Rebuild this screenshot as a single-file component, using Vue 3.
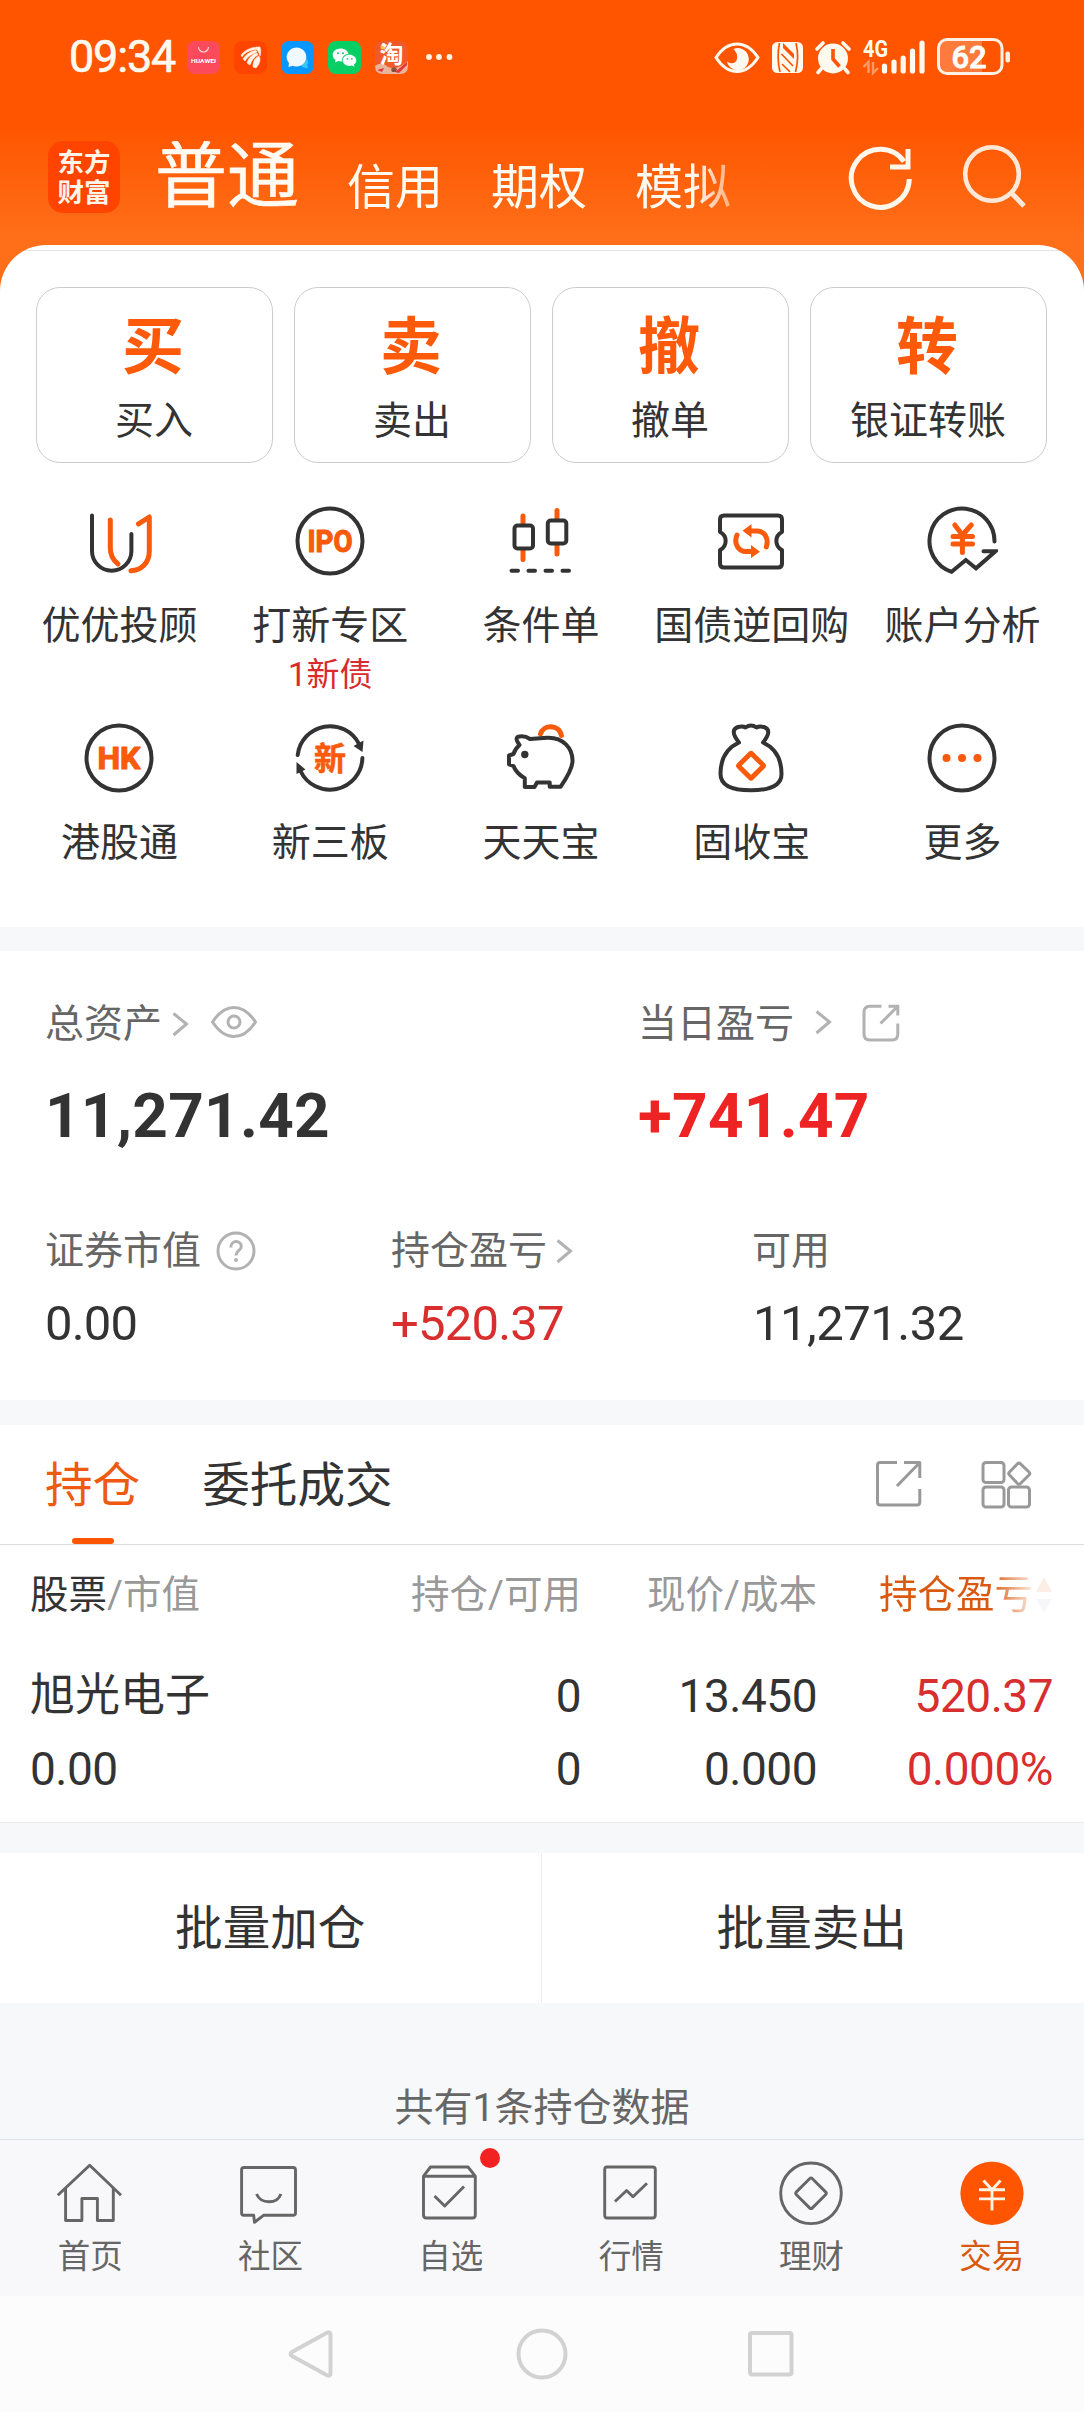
<script setup>
const accounts = ['信用', '期权', '模拟']

const trades = [
  { mark: '买', label: '买入' },
  { mark: '卖', label: '卖出' },
  { mark: '撤', label: '撤单' },
  { mark: '转', label: '银证转账' },
]

const tools = [
  { icon: 'advisor', label: '优优投顾' },
  { icon: 'ipo', label: '打新专区', note: '1新债' },
  { icon: 'candles', label: '条件单' },
  { icon: 'ticket', label: '国债逆回购' },
  { icon: 'analysis', label: '账户分析' },
  { icon: 'hk', label: '港股通' },
  { icon: 'board', label: '新三板' },
  { icon: 'pig', label: '天天宝' },
  { icon: 'bag', label: '固收宝' },
  { icon: 'more', label: '更多' },
]

const tabs = [
  { icon: 'home', label: '首页' },
  { icon: 'community', label: '社区' },
  { icon: 'watch', label: '自选', dot: true },
  { icon: 'market', label: '行情' },
  { icon: 'finance', label: '理财' },
  { icon: 'trade', label: '交易', active: true },
]
</script>

<template>
  <div class="screen">
    <header class="header">
      <div class="status">
        <span class="clock">09:34</span>
        <div class="apps">
          <svg width="33" height="33" viewBox="0 0 33 33">
            <rect width="33" height="33" rx="8" fill="#fb4a5c" />
            <path d="M11.500 6a5 5 0 0 0 10 0" fill="none" stroke="#ffd9dc" stroke-width="1.200" />
            <text x="4" y="21.500" font-size="5.600" font-weight="700" textLength="25" lengthAdjust="spacingAndGlyphs" fill="#fff">HUAWEI</text>
          </svg>
          <svg width="33" height="33" viewBox="0 0 33 33">
            <rect width="33" height="33" rx="8" fill="#ff4400" />
            <path d="M7 14C12 8 18 6 26 6C27 10 27 13 26 15C25 12 24 9 22 8.500C17 9 11 11 8 16ZM9 18C13 12 18 10 22 9.500L23 11C18 13 14 15 11 20ZM13 22C15 16 19 13 23 12L24 14C20 16 18 19 16 24ZM19 26C19 20 21 17 25 15C27 18 26 23 22 27Z" fill="#fff4e6" stroke="#fff4e6" stroke-width=".6" />
          </svg>
          <svg width="33" height="33" viewBox="0 0 33 33">
            <rect width="33" height="33" rx="8" fill="#0a96ff" />
            <path d="M19 22c5 1 7-3 6-5 3 3 2 6 1 7l1 3c-3 0-6 0-8-5z" fill="#35c8f5" />
            <path d="M15.500 6.500a10 9.500 0 1 1-4 18.300L7.500 26l.5-4A10 9.500 0 0 1 15.500 6.500z" fill="#f0f9ff" />
          </svg>
          <svg width="33" height="33" viewBox="0 0 33 33">
            <rect width="33" height="33" rx="8" fill="#07cf63" />
            <path d="M12.500 7.500c-4.500 0-7.800 2.900-7.800 6.500 0 2.100 1.100 3.800 2.900 5L7 21.500l3-1.400c1 .3 3 .4 4 .3-.8-4.500 3.200-7.700 6.500-7.500-.8-3.300-4-5.400-8-5.400z" fill="#fff" />
            <path d="M21.500 13.700c-4 0-6.800 2.500-6.800 5.600s3 5.600 6.800 5.600c.8 0 1.600-.1 2.400-.4l2.600 1.300-.6-2.200c1.400-1 2.400-2.500 2.400-4.300 0-3.100-3-5.600-6.800-5.600z" fill="#fff" />
            <g fill="#07cf63">
              <circle cx="10" cy="12.200" r="1" /><circle cx="15" cy="12.200" r="1" />
              <circle cx="19.400" cy="17.800" r=".9" /><circle cx="23.800" cy="17.800" r=".9" />
            </g>
          </svg>
          <svg width="33" height="33" viewBox="0 0 33 33">
            <rect width="33" height="33" rx="8" fill="#f0592a" />
            <path d="M0 25Q7 20 13 26Q22 30 33 20V25Q33 33 25 33H8Q0 33 0 25Z" fill="#e8b49a" />
            <path d="M2 29l7-2-2 4zM20 31l12-10v3l-8 8z" fill="#e8343a" />
            <path d="M16 28l3-2 3 2-1 3h-4z" fill="#8a5238" />
            <circle cx="8" cy="6" r="2.500" fill="#ffc44d" />
            <text x="4.500" y="22" font-size="24" font-weight="700" fill="#fff">淘</text>
          </svg>
        </div>
        <svg class="dots" width="28" height="8" viewBox="0 0 28 8" fill="#fff4e6">
          <circle cx="4" cy="4" r="2.900" /><circle cx="14" cy="4" r="2.900" /><circle cx="24.500" cy="4" r="2.900" />
        </svg>
        <svg class="signals" width="300" height="40" viewBox="712 36 300 40">
          <path d="M716 56.500Q725 43 737 43T758 56.500Q749 70.500 737 70.500T716 56.500Z" fill="none" stroke="#fffaf0" stroke-width="3" />
          <path d="M733.500 48a11 11 0 1 1-6.500 12.500c4 3 9 2 10-2.500 1-4.500-1-7-3.500-10z" fill="#fffaf0" />
          <rect x="772" y="41" width="31" height="31" rx="5.500" fill="#fffaf0" />
          <path d="M779.500 42q-3 14 .5 29M796 42q3.500 14-.5 29M781.500 53l11.500 12M782 63l8 8" fill="none" stroke="#ff5500" stroke-width="1.700" />
          <path d="M783 42l11 11v5l-11-11z" fill="#ff5500" />
          <circle cx="833" cy="57.500" r="15" fill="#fffaf0" />
          <path d="M817 48l6-6M843 42l6 6M821 68l-3 3.500M845 68l3 3.500" stroke="#fffaf0" stroke-width="3.600" stroke-linecap="round" />
          <path d="M833 48v10l6.500 7.500" fill="none" stroke="#ff5500" stroke-width="3.600" />
          <text x="863" y="55.500" font-size="23" font-weight="700" textLength="25" lengthAdjust="spacingAndGlyphs" fill="#fffaf0">4G</text>
          <path d="M863.500 66l5-5v11M878 67l-5 5V61" fill="none" stroke="#ff9a66" stroke-width="2.400" />
          <path d="M884.500 65v5M894 61v9M903.200 57v13M912.500 50v20M922 42v28" stroke="#fffaf0" stroke-width="5.200" stroke-linecap="round" />
          <path d="M946 40H982V72H946Q939 72 939 65V47Q939 40 946 40Z" fill="#ff7b3c" />
          <rect x="938.500" y="38.500" width="63.500" height="34" rx="8.500" fill="none" stroke="#fff1e6" stroke-width="3" />
          <rect x="1005.500" y="50.500" width="4.500" height="11" rx="2" fill="#fff1e6" />
          <text x="951.500" y="67" font-size="31" font-weight="500" textLength="35" fill="#fff" stroke="#fff" stroke-width=".8">62</text>
        </svg>
      </div>
      <div class="accounts">
        <div class="logo"><span>东方</span><span>财富</span></div>
        <div class="account-list">
          <span class="current">普通</span>
          <span v-for="a in accounts" :key="a" class="account">{{ a }}</span>
        </div>
        <svg class="actions" width="184" height="72" viewBox="846 141 184 72" fill="none">
          <path d="M908.300 179A29 29 0 1 1 903 161.500" stroke="#fff6ec" stroke-width="5" />
          <path d="M907 149V167H889" stroke="#fff6ec" stroke-width="5" />
          <circle cx="991" cy="174" r="26.800" stroke="#ffe8d8" stroke-width="4.600" />
          <path d="M1010 192.500L1023 206" stroke="#ffe8d8" stroke-width="5" />
        </svg>
      </div>
    </header>

    <main>
      <section class="sheet">
        <div class="trades">
          <div v-for="t in trades" :key="t.mark" class="trade">
            <b>{{ t.mark }}</b>
            <span>{{ t.label }}</span>
          </div>
        </div>
        <div class="tools">
          <div v-for="t in tools" :key="t.icon" class="tool">
            <svg width="72" height="72" viewBox="0 0 72 72" fill="none" stroke-width="4" stroke-linecap="round" stroke-linejoin="round">
              <g v-if="t.icon === 'advisor'">
                <path class="ink" d="M9 10.500V46A19.700 19.700 0 0 0 48.400 46V29" />
                <path class="hot" d="M27.300 15V43Q27.300 53 35 59" />
                <path class="hot" d="M55.500 18.800L66.300 12V46C66.300 58 58 65.700 48 65.700" />
              </g>
              <g v-else-if="t.icon === 'ipo'">
                <circle class="ink" cx="36" cy="36" r="32.500" />
                <text class="glyph" x="13.500" y="47" font-size="31" textLength="45" lengthAdjust="spacingAndGlyphs">IPO</text>
              </g>
              <g v-else-if="t.icon === 'candles'">
                <path class="hot" d="M19 11V19M19 46V54.500M53 5.500V13M53 41V49" />
                <rect class="ink" x="10.500" y="20.500" width="18.500" height="23" rx="3" />
                <rect class="ink" x="43.800" y="15.500" width="18.500" height="23" rx="3" />
                <path class="ink" d="M7.500 65.700H14M24.500 65.700H31M41.500 65.700H48M58.500 65.700H65" />
              </g>
              <g v-else-if="t.icon === 'ticket'">
                <path class="ink" d="M9 10.500H63Q67 10.500 67 14.500V27A10 10 0 0 0 67 45V58.500Q67 62.500 63 62.500H9Q5 62.500 5 58.500V45A10 10 0 0 0 5 27V14.500Q5 10.500 9 10.500Z" />
                <path class="hot" d="M35 26H42C50 26 54 34 51.300 42M38 46.500H31C23 46.500 18.500 38 22 30" />
                <path class="hot-fill" d="M27.500 25.700L36.500 19V32.500ZM45 46.700L36 40V53Z" />
              </g>
              <g v-else-if="t.icon === 'analysis'">
                <path class="ink" stroke-linejoin="miter" d="M68.500 36.500A32.500 32.500 0 1 0 25.600 66.800L39.800 55L50 63.300L69.500 46.300H57.500" />
                <path class="hot" d="M28.800 20L36.400 30L45.300 20M36.400 30V47.500M27 31.500H46.500M27 39H46.500" />
              </g>
              <g v-else-if="t.icon === 'hk'">
                <circle class="ink" cx="36" cy="36" r="32.500" />
                <text class="glyph" x="14.500" y="47" font-size="31" textLength="43" lengthAdjust="spacingAndGlyphs">HK</text>
              </g>
              <g v-else-if="t.icon === 'board'">
                <path class="ink" d="M3.700 33A32.500 32.500 0 0 1 65 22M68.400 36A32.500 32.500 0 0 1 6.500 49" />
                <path class="ink-fill" d="M59.500 24L69.500 18.500L68.500 30ZM2.500 40L11.500 47.500L2.500 52Z" />
                <text class="glyph thin" x="20" y="48" font-size="32">新</text>
              </g>
              <g v-else-if="t.icon === 'pig'">
                <path class="hot" d="M36.500 12C39 2.500 55 1.500 57.400 13.500" />
                <path class="ink" d="M26 17L43 15.700C59 15 69 26 68.500 39.700Q68 48 56.700 64.700H45.700V60.500H33L30.500 65H20.800V56.300Q12 51 9.500 44L5 42.300V33.500L9.500 32Q11 27 15.500 23Q11 17 13.500 15Q20 13 26 17Z" />
                <circle class="ink-fill" cx="20.800" cy="32.500" r="3.700" />
              </g>
              <g v-else-if="t.icon === 'bag'">
                <path class="ink" d="M24 20.500Q14 8 23 5Q28 4 30.500 5.500Q36 1.500 41.500 5.500Q44 4 49 5Q58 8 48 20.500C60 26 66.500 37 66.500 52C66.500 64 55 68.300 36 68.300S5.500 64 5.500 52C5.500 37 12 26 24 20.500Z" />
                <rect class="hot" x="27" y="34.700" width="18" height="18" rx="1" transform="rotate(45 36 43.700)" />
              </g>
              <g v-else>
                <circle class="ink" cx="36" cy="36" r="32.500" />
                <g class="hot-fill"><circle cx="20.500" cy="36" r="4" /><circle cx="36" cy="36" r="4" /><circle cx="51.500" cy="36" r="4" /></g>
              </g>
            </svg>
            <span class="tool-label">{{ t.label }}</span>
            <span v-if="t.note" class="tool-note">{{ t.note }}</span>
          </div>
        </div>
      </section>

      <section class="assets">
        <div class="assets-top">
          <div>
            <div class="label">
              <span>总资产</span>
              <svg class="chev" width="18" height="28" viewBox="0 0 18 28"><path d="M2.500 3.500L15.500 14L2.500 25" /></svg>
              <svg class="eye" width="48" height="36" viewBox="0 0 48 36">
                <path d="M2.500 18Q12 3.500 24 3.500T45.500 18Q36 32.500 24 32.500T2.500 18Z" /><circle cx="24" cy="18" r="6" />
              </svg>
            </div>
            <div class="total">11,271.42</div>
          </div>
          <div>
            <div class="label">
              <span>当日盈亏</span>
              <svg class="chev wide" width="18" height="28" viewBox="0 0 18 28"><path d="M2.500 3.500L15.500 14L2.500 25" /></svg>
              <svg class="share" width="40" height="40" viewBox="0 0 40 40">
                <path d="M20.500 3.300H9Q3 3.300 3 9.300V31Q3 37 9 37H31Q36.800 37 36.800 31V20.500M27.500 3.300H36.800V12.500M36.800 3.300L19.500 20.500" />
              </svg>
            </div>
            <div class="total gain">+741.47</div>
          </div>
        </div>
        <div class="assets-bottom">
          <div>
            <div class="label">
              <span>证券市值</span>
              <svg class="help" width="40" height="40" viewBox="0 0 40 40">
                <circle cx="20" cy="20" r="18" /><path d="M14.800 16.500C14.800 8.500 25.500 9 25.300 15.500C25.200 19.500 20 19.500 20 24.500" /><circle class="pt" cx="20" cy="29" r="2" />
              </svg>
            </div>
            <div class="value">0.00</div>
          </div>
          <div>
            <div class="label">
              <span>持仓盈亏</span>
              <svg class="chev near" width="18" height="28" viewBox="0 0 18 28"><path d="M2.500 3.500L15.500 14L2.500 25" /></svg>
            </div>
            <div class="value gain-soft">+520.37</div>
          </div>
          <div>
            <div class="label"><span>可用</span></div>
            <div class="value last">11,271.32</div>
          </div>
        </div>
      </section>

      <section class="holdings">
        <div class="holdings-tabs">
          <span class="tab on">持仓</span>
          <span class="tab">委托成交</span>
          <svg class="tab-icons" width="160" height="52" viewBox="874 1458 160 52" fill="none" stroke="#999" stroke-width="3" stroke-linejoin="round">
            <path d="M897 1462.500H880Q877.500 1462.500 877.500 1465V1502Q877.500 1505 880 1505H917Q919.800 1505 919.800 1502V1489M904 1462.500H919.800V1478M919.800 1462.500L897 1486" />
            <rect x="983" y="1462.500" width="21" height="20" rx="3" />
            <rect x="983" y="1487" width="21" height="20" rx="3" />
            <rect x="1008.500" y="1487" width="21" height="20" rx="3" />
            <path d="M1017.500 1463.800Q1019 1462.500 1020.500 1463.800L1029 1472Q1030.500 1473.500 1029 1475L1020.500 1483.500Q1019 1485 1017.500 1483.500L1009.500 1475Q1008 1473.500 1009.500 1472Z" />
          </svg>
        </div>
        <div class="grid head">
          <span><em>股票</em>/市值</span>
          <span>持仓/可用</span>
          <span>现价/成本</span>
          <span class="sorted">
            <em>持仓盈亏</em>
            <svg width="18" height="36" viewBox="0 0 18 36"><path d="M9 0L17 15H1Z" fill="#fdeee5" /><path d="M9 36L17 22H1Z" fill="#f7f7f9" /></svg>
          </span>
        </div>
        <div class="grid row first">
          <span class="name">旭光电子</span><span>0</span><span>13.450</span><span class="gain-soft">520.37</span>
        </div>
        <div class="grid row second">
          <span>0.00</span><span>0</span><span>0.000</span><span class="gain-soft">0.000%</span>
        </div>
      </section>

      <div class="batch">
        <span>批量加仓</span>
        <span>批量卖出</span>
      </div>
      <p class="count">共有1条持仓数据</p>
    </main>

    <nav class="tabbar">
      <div v-for="t in tabs" :key="t.icon" class="nav-item" :class="{ active: t.active }">
        <div class="nav-icon">
          <svg width="66" height="66" viewBox="0 0 66 66" fill="none" stroke="#666" stroke-width="2.900" stroke-linejoin="round">
            <path v-if="t.icon === 'home'" d="M.8 35.300L32.700 5.200L64 35.300M8.600 28.500V60.500H24.900V38.500H40.400V60.500H56.300V28.500" />
            <g v-else-if="t.icon === 'community'">
              <path d="M7 7.500H56Q58.500 7.500 58.500 10V53Q58.500 55.300 56 55.300H26.500L17.500 62.300L16.700 55.300H7Q4.600 55.300 4.600 53V10Q4.600 7.500 7 7.500Z" />
              <path d="M19.500 34Q23 41.800 32 41.800T44 34" />
            </g>
            <path v-else-if="t.icon === 'watch'" d="M5.500 16.200L12.500 7H50L57.300 16.200V55Q57.300 58 54.500 58H8.500Q5.500 58 5.500 55ZM5.500 16.200H57.300M16.500 36L26.700 46L46 26.500" />
            <path v-else-if="t.icon === 'market'" d="M9 7H54.500Q57.300 7 57.300 9.500V55Q57.300 58 54.500 58H9Q6.700 58 6.700 55V9.500Q6.700 7 9 7ZM17 41.500L28.600 30.500L35 36.800L49 23.300" />
            <g v-else-if="t.icon === 'finance'">
              <circle cx="33" cy="33.300" r="30.300" />
              <rect x="21.700" y="22" width="22.600" height="22.600" rx="2" transform="rotate(45 33 33.300)" />
            </g>
            <g v-else>
              <circle cx="33" cy="33.300" r="31.600" fill="#ff5500" stroke="none" />
              <path d="M24.500 20.500L33 29.700L41.500 20.500M33 29.700V50.500M20 29.700H46M20 38.900H46" stroke="#fff4e4" />
            </g>
          </svg>
          <i v-if="t.dot" class="badge"></i>
        </div>
        <span>{{ t.label }}</span>
      </div>
    </nav>

    <footer class="system">
      <svg width="56" height="56" viewBox="0 0 56 56"><path d="M41.500 7Q45.500 5 45.500 9V47Q45.500 51 41.500 49L7 30Q4 28 7 26Z" /></svg>
      <svg width="56" height="56" viewBox="0 0 56 56"><circle cx="28" cy="28" r="23.500" /></svg>
      <svg width="56" height="56" viewBox="0 0 56 56"><rect x="6" y="7" width="41.500" height="41.500" rx="2" /></svg>
    </footer>
  </div>
</template>

<style>
body {
  background: #fff;
}
</style>

<style scoped>
.screen {
  width: 1084px;
  height: 2412px;
  display: flex;
  flex-direction: column;
  overflow: hidden;
  background: #f7f8fa;
  color: #333;
  font-family: Roboto, "Noto Sans CJK SC", sans-serif;
}
svg { display: block; flex: none; }

/* header */
.header {
  height: 291px;
  flex: none;
  background: linear-gradient(#ff5500 0, #ff5500 125px, #ff6e18 235px, #ff6e18 100%);
}
.status {
  height: 114px;
  display: flex;
  align-items: center;
  padding-left: 69px;
}
.clock {
  width: 118px;
  font-size: 45px;
  line-height: 56px;
  color: #fffaf0;
  letter-spacing: -1.200px;
  -webkit-text-stroke: .6px #fffaf0;
}
.apps { display: flex; gap: 14px; }
.dots { margin-left: 17px; }
.signals { margin: 0 72px 0 auto; }
.accounts {
  height: 72px;
  margin-top: 27px;
  padding-left: 48px;
  display: flex;
}
.logo {
  width: 72px;
  height: 72px;
  flex: none;
  box-sizing: border-box;
  padding-top: 7px;
  border-radius: 15px;
  background: #ff4400;
  color: #fff4e8;
  font-size: 26.500px;
  font-weight: 700;
  line-height: 30px;
  display: flex;
  flex-direction: column;
  align-items: center;
}
.account-list {
  width: 577px;
  margin-left: 35px;
  display: flex;
  align-items: flex-end;
  gap: 48px;
  white-space: nowrap;
  color: #fffaf2;
  -webkit-mask-image: linear-gradient(90deg, #000 540px, rgba(0, 0, 0, .5) 575px);
  mask-image: linear-gradient(90deg, #000 540px, rgba(0, 0, 0, .5) 575px);
}
.current {
  font-size: 72px;
  line-height: 70px;
  margin-bottom: 1px;
  -webkit-text-stroke: .6px #fffaf2;
}
.account { font-size: 48px; line-height: 48px; margin-bottom: 1px; }
.actions { margin-left: 115px; }

/* first sheet */
.sheet {
  height: 682px;
  margin-top: -46px;
  border-radius: 46px 46px 0 0;
  background: linear-gradient(#fff 5px, #e4e4e4 5px, #e4e4e4 6px, #fff 6px);
}
.trades {
  padding: 42px 37px 0 36px;
  display: flex;
  gap: 21px;
}
.trade {
  flex: 1;
  height: 176px;
  box-sizing: border-box;
  padding-top: 24px;
  border: 1px solid #ccc;
  border-radius: 24px;
  display: flex;
  flex-direction: column;
  align-items: center;
}
.trade b { margin-right: 3px; font-size: 62px; line-height: 72px; color: #ff5a0a; }
.trade span { margin: 12px 1px 0 0; font-size: 39px; line-height: 50px; }
.tools {
  padding: 42px 16px 0 14px;
  display: grid;
  grid-template-columns: repeat(5, 1fr);
  grid-auto-rows: 217px;
}
.tool {
  display: flex;
  flex-direction: column;
  align-items: center;
  white-space: nowrap;
}
.tool svg { margin-right: 1px; }
.tool-label { margin-top: 24px; font-size: 39px; line-height: 50px; }
.tool-note { margin-top: 4px; font-size: 33px; line-height: 40px; color: #d92b2b; }
.ink { stroke: #333; }
.hot { stroke: #f95a0c; stroke-width: 5px; }
.ink-fill { fill: #333; }
.hot-fill { fill: #f95a0c; }
.glyph { fill: #f95a0c; font-weight: 700; stroke: #f95a0c; stroke-width: 1.200px; }
.thin { stroke-width: .6px; }

/* assets */
.assets {
  height: 449px;
  box-sizing: border-box;
  margin-top: 24px;
  padding: 45px 0 0 45px;
  background: #fff;
}
.assets-top { display: grid; grid-template-columns: 593px 1fr; }
.assets-bottom { display: grid; grid-template-columns: 346px 361px 1fr; margin-top: 67px; }
.label {
  height: 56px;
  display: flex;
  align-items: center;
  font-size: 39px;
  line-height: 56px;
  color: #666;
}
.label svg { fill: none; stroke: #b2b2b2; stroke-width: 3px; }
.chev { margin-left: 9px; }
.chev.wide { margin: 0 0 4px 20px; }
.chev.near { margin-left: 8px; }
.label .eye { margin: 0 0 5px 21px; }
.label .share { margin: 0 0 3px 29px; }
.label .help { margin-left: 15px; }
.label .pt { fill: #b2b2b2; stroke: none; }
.total { margin-top: 24px; font-size: 62px; line-height: 80px; font-weight: 700; letter-spacing: .3px; }
.value { margin-top: 15px; font-size: 49px; line-height: 60px; letter-spacing: -.8px; }
.value.last { padding-left: 1px; letter-spacing: -.5px; }
.gain { color: #ee2424; }
.gain-soft { color: #d92e2e; }

/* holdings */
.holdings {
  height: 398px;
  box-sizing: border-box;
  margin-top: 25px;
  background: #fff;
  border-bottom: 1px solid #e9eaec;
}
.holdings-tabs {
  height: 120px;
  box-sizing: border-box;
  padding: 0 50px 0 45px;
  border-bottom: 1px solid #ddd;
  display: flex;
}
.tab {
  height: 119px;
  box-sizing: border-box;
  margin-right: 62px;
  font-size: 47.600px;
  line-height: 122px;
}
.tab.on {
  color: #ef5a10;
  display: flex;
  flex-direction: column;
  align-items: center;
}
.tab.on::after {
  content: "";
  flex: none;
  width: 42px;
  height: 6px;
  margin-top: -9px;
  border-radius: 3px;
  background: #ff5500;
}
.tab-icons { margin: 33px 0 0 auto; }
.grid {
  display: grid;
  grid-template-columns: 315px 236px 236px 236px;
  padding-left: 30px;
  text-align: right;
}
.grid > :first-child { text-align: left; }
.head { margin-top: 24px; font-size: 38.500px; line-height: 52px; color: #999; white-space: nowrap; }
.head em { font-style: normal; color: #333; }
.head .sorted { display: flex; justify-content: flex-end; align-items: center; gap: 2px; }
.head .sorted em {
  background: linear-gradient(90deg, #d8590f 72%, #fbe9df 100%);
  -webkit-background-clip: text;
  background-clip: text;
  color: transparent;
}
.row { font-size: 46px; line-height: 60px; letter-spacing: -.5px; }
.row .name { font-size: 45px; letter-spacing: 0; }
.first { margin-top: 45px; }
.second { margin-top: 13px; }

/* batch actions */
.batch {
  height: 150px;
  margin-top: 30px;
  padding-right: 2px;
  box-sizing: border-box;
  display: flex;
  background: #fff;
  font-size: 47.600px;
  line-height: 152px;
  text-align: center;
}
.batch span { flex: 1; }
.batch span + span { border-left: 1px solid #ececee; }
.count {
  margin: 79px 0 0;
  font-size: 39px;
  line-height: 52px;
  text-align: center;
  color: #666;
}
main { height: 1894px; flex: none; }

/* bottom bars */
.tabbar {
  height: 157px;
  flex: none;
  margin-top: -46px;
  box-sizing: border-box;
  padding-right: 2px;
  border-top: 1px solid #dfe1e4;
  background: #f8f8fa;
  display: flex;
}
.nav-item {
  flex: 1;
  padding-top: 20px;
  display: flex;
  flex-direction: column;
  align-items: center;
  font-size: 32.500px;
  line-height: 40px;
  color: #666;
}
.nav-item span { margin-top: 11px; }
.nav-item.active { color: #d9590f; }
.nav-icon { position: relative; }
.badge {
  position: absolute;
  top: -12px;
  right: -16px;
  width: 20px;
  height: 20px;
  border-radius: 50%;
  background: #f22222;
}
.system {
  height: 116px;
  flex: none;
  background: #fcfcfc;
  display: flex;
  justify-content: center;
  align-items: center;
  gap: 173.500px;
}
.system svg { fill: none; stroke: #d2d2d2; stroke-width: 4px; }
</style>
